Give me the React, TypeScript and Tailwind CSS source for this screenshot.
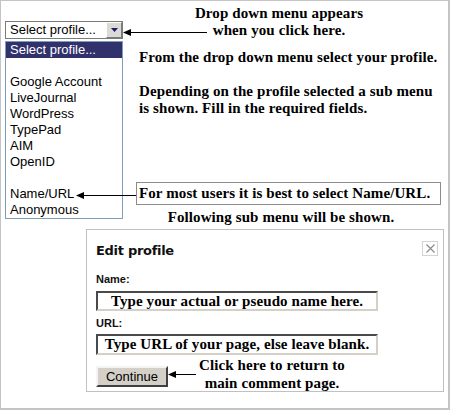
import React from 'react';

const serif = "font-['Liberation_Serif','Times_New_Roman',serif] font-bold text-[15px] tracking-[0.1px] text-black";
const sans = "font-['Liberation_Sans',Arial,sans-serif]";
const label = "font-['Liberation_Sans',Arial,sans-serif] font-bold text-[11px] leading-[12px] text-[#111]";

const Arrow: React.FC<{ width: number; className?: string }> = ({ width, className }) => (
  <svg width={width} height={9} viewBox={`0 0 ${width} 9`} className={className}>
    <path d="M0 4.5 L8 1 L8 8 Z" fill="black" />
    <line x1="7" y1="4.5" x2={width} y2="4.5" stroke="black" strokeWidth="1" />
  </svg>
);

const profiles = ['', 'Google Account', 'LiveJournal', 'WordPress', 'TypePad', 'AIM', 'OpenID', ''];

export default function App() {
  return (
    <div className="w-[450px] h-[410px] bg-white border border-r-2 border-b-2 border-[#c4c4c4] box-border">
      <div className="flex items-start h-[228px]">
        {/* select + open list */}
        <div className={`ml-[4px] mt-[20px] w-[118px] ${sans} text-[13px] text-black`}>
          <div className="relative flex h-[18px] border border-[#7b7b7b] bg-white">
            <div className="flex-1 pl-[4px] leading-[16px]">Select profile...</div>
            <div className="w-[16px] h-[16px] flex items-center justify-center bg-[#dcdad5] border border-t-white border-l-white border-b-[#7a7a7a] border-r-[#7a7a7a]">
              <svg width="7" height="4" viewBox="0 0 7 4">
                <path d="M0 0 L7 0 L3.5 4 Z" fill="#1c1c6a" />
              </svg>
            </div>
            <Arrow width={84} className="absolute left-full top-[6px] ml-[1px]" />
          </div>
          <div className="mt-[2px] border border-[#7f9db9] bg-white">
            <div className="h-[16px] leading-[16px] pl-[4px] bg-[#31316b] text-white">Select profile...</div>
            {profiles.map((p, i) => (
              <div key={i} className="h-[16px] leading-[16px] pl-[4px]">{p}</div>
            ))}
            <div className="h-[16px] leading-[16px] pl-[4px] flex items-center">
              <span>Name/URL</span>
              <Arrow width={61} className="ml-[2px] mt-[3px] shrink-0" />
            </div>
            <div className="h-[16px] leading-[16px] pl-[4px]">Anonymous</div>
          </div>
        </div>

        {/* notes */}
        <div className={`flex-1 ${serif} leading-[17px]`}>
          <div className="mt-[3.5px] ml-[56px] w-[200px] text-center">
            Drop down menu appears
            <br />
            when you click here.
          </div>
          <div className="mt-[10px] ml-[16px] whitespace-nowrap">From the drop down menu select your profile.</div>
          <div className="mt-[17px] ml-[16px] whitespace-nowrap">
            Depending on the profile selected a sub menu
            <br />
            is shown. Fill in the required fields.
          </div>
          <div className="mt-[65.5px] ml-[13px] w-[305px] h-[23px] border border-[#8c8c8c] px-[2px] py-[2px] whitespace-nowrap">
            For most users it is best to select Name/URL.
          </div>
          <div className="mt-[3.5px] ml-[13px] w-[290px] text-center whitespace-nowrap">Following sub menu will be shown.</div>
        </div>
      </div>

      {/* edit profile dialog */}
      <div className="ml-[85px] w-[358px] h-[163px] border border-[#c0c0c0] pl-[9px] bg-white">
        <div className="flex items-start justify-between pt-[11px]">
          <div className="mt-[2px] font-['DejaVu_Sans',Verdana,sans-serif] font-bold text-[13px] leading-[16px] tracking-[-0.3px] text-[#111]">
            Edit profile
          </div>
          <div className="mr-[5px] w-[16px] h-[15px] border border-[#d4d4d4] flex items-center justify-center">
            <svg width="9" height="9" viewBox="0 0 9 9">
              <path d="M0.5 0.5 L8.5 8.5 M8.5 0.5 L0.5 8.5" stroke="#8a8a8a" strokeWidth="1.1" />
            </svg>
          </div>
        </div>
        <div className={`mt-[14px] ${label}`}>Name:</div>
        <div className={`mt-[6px] w-[282px] h-[20px] border-2 border-t-[#4a4a4a] border-l-[#4a4a4a] border-b-[#d4d0c8] border-r-[#d4d0c8] text-center leading-[16px] whitespace-nowrap ${serif}`}>
          Type your actual or pseudo name here.
        </div>
        <div className={`mt-[6px] ${label}`}>URL:</div>
        <div className={`mt-[5px] w-[282px] h-[21px] border-2 border-t-[#4a4a4a] border-l-[#4a4a4a] border-b-[#d4d0c8] border-r-[#d4d0c8] text-center leading-[17px] whitespace-nowrap ${serif}`}>
          Type URL of your page, else leave blank.
        </div>
        <div className="mt-[1px] flex items-start">
          <button
            className={`mt-[10px] w-[72px] h-[21px] bg-[#d4d0c8] border-2 border-t-[#f4f4f4] border-l-[#f4f4f4] border-b-[#404040] border-r-[#404040] ${sans} text-[13px] leading-[16px] text-black`}
          >
            Continue
          </button>
          <Arrow width={28} className="mt-[13.5px] shrink-0" />
          <div className={`ml-[1px] w-[150px] text-center leading-[18px] whitespace-nowrap ${serif}`}>
            Click here to return to
            <br />
            main comment page.
          </div>
        </div>
      </div>
    </div>
  );
}
